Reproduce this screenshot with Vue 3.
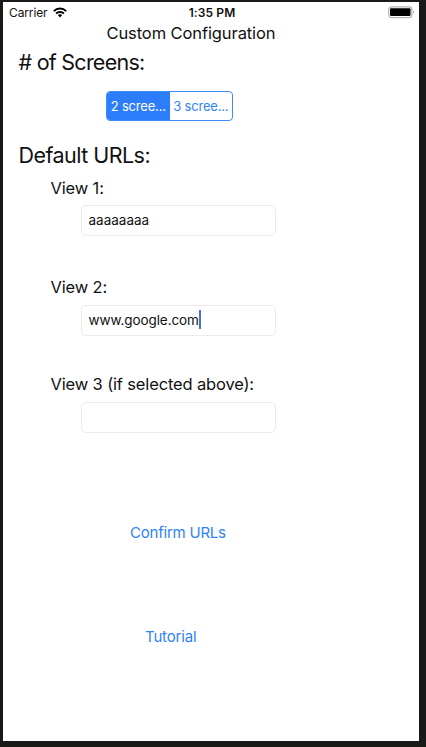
<script setup>
import { ref } from 'vue'

const screens = ref(2)
const options = [
  { value: 2, label: '2 scree...' },
  { value: 3, label: '3 scree...' }
]
const views = ref([
  { id: 'one', label: 'View 1:', url: 'aaaaaaaa', focused: false },
  { id: 'two', label: 'View 2:', url: 'www.google.com', focused: true },
  { id: 'three', label: 'View 3 (if selected above):', url: '', focused: false }
])
</script>

<template>
  <div class="device">
    <main class="screen">
      <header class="status">
        <div class="carrier">
          <span class="carrier-name">Carrier</span>
          <svg class="wifi" width="14" height="11" viewBox="0 0 14 11">
            <g fill="none" stroke="#000" stroke-width="1.9">
              <path d="M0.8 4.1C4.2 0.7 9.8 0.7 13.2 4.1" />
              <path d="M3.1 6.5C5.2 4.4 8.8 4.4 10.9 6.5" />
            </g>
            <path d="M4.8 8.1C6 7 8 7 9.2 8.1L7 10.4Z" />
          </svg>
        </div>
        <span class="time">1:35 PM</span>
        <svg class="battery" width="27" height="13" viewBox="0 0 27 13">
          <rect x="0.7" y="0.8" width="23.1" height="10.8" rx="2.6" fill="#fff" stroke="#b5b5b5" stroke-width="1.2" />
          <rect x="2" y="2.3" width="20.5" height="7.8" rx="1" />
          <path d="M25 4.3C26.3 4.8 26.3 7.6 25 8.1Z" fill="#aaa" />
        </svg>
      </header>

      <h1 class="title">Custom Configuration</h1>
      <h2 class="heading screens-heading"># of Screens:</h2>

      <div class="segmented">
        <button
          v-for="option in options"
          :key="option.value"
          class="segment"
          :class="{ active: screens === option.value }"
          @click="screens = option.value"
        >{{ option.label }}</button>
      </div>

      <h2 class="heading urls-heading">Default URLs:</h2>

      <section v-for="view in views" :key="view.id" class="view" :class="view.id">
        <div class="label">{{ view.label }}</div>
        <div class="field" :class="{ focused: view.focused }">
          <span class="value">{{ view.url }}</span>
          <i v-if="view.focused" class="caret"></i>
        </div>
      </section>

      <button class="link confirm">Confirm URLs</button>
      <button class="link tutorial">Tutorial</button>
    </main>
  </div>
</template>

<style>
body {
  margin: 0;
  background: #191918;
}
</style>

<style scoped>
.device {
  box-sizing: border-box;
  width: 426px;
  height: 747px;
  padding: 2px 7px 6px 3px;
  background: #191918;
  font-family: Inter, "Liberation Sans", sans-serif;
  color: #111;
}
.screen {
  display: flex;
  flex-direction: column;
  align-items: flex-start;
  width: 416px;
  height: 739px;
  background: #fff;
  overflow: hidden;
}
h1, h2 {
  margin: 0;
  font-weight: 400;
}
button {
  display: block;
  padding: 0;
  border: 0;
  background: none;
  font-family: inherit;
  white-space: nowrap;
}
.status {
  display: grid;
  grid-template-columns: 1fr auto 1fr;
  align-items: center;
  box-sizing: border-box;
  width: 416px;
  height: 20px;
  padding: 0 4px 0 6px;
  font-size: 12px;
  line-height: 20px;
}
.carrier {
  display: flex;
  align-items: center;
  gap: 5px;
}
.carrier-name {
  padding-top: 1px;
  letter-spacing: -0.12px;
}
.time {
  padding-top: 1px;
  font-weight: 600;
  letter-spacing: 0.1px;
}
.battery {
  justify-self: end;
}
.title {
  height: 22px;
  margin-left: 103.5px;
  font-size: 16.5px;
  line-height: 22px;
  letter-spacing: -0.1px;
}
.heading {
  height: 28px;
  margin-left: 15.5px;
  font-size: 21.5px;
  line-height: 28px;
}
.screens-heading {
  margin-top: 4px;
  letter-spacing: -0.75px;
}
.segmented {
  display: flex;
  box-sizing: border-box;
  width: 127px;
  height: 30px;
  margin: 15px 0 0 103px;
  border: 1px solid #3a8dfb;
  border-radius: 4px;
  overflow: hidden;
}
.segment {
  flex: 1;
  color: #2f83fb;
  font-size: 13px;
  line-height: 28px;
  letter-spacing: -0.18px;
}
.segment.active {
  background: #2d7dfb;
  color: #fff;
}
.urls-heading {
  margin-top: 20px;
  letter-spacing: -0.54px;
}
.view {
  display: flex;
  flex-direction: column;
}
.view.one {
  margin-top: 7px;
}
.view.two {
  margin-top: 40px;
}
.view.three {
  margin-top: 37px;
}
.label {
  height: 22px;
  margin-left: 47.5px;
  font-size: 16.5px;
  line-height: 22px;
  letter-spacing: -0.15px;
}
.view.one .label {
  height: 21px;
  padding-top: 1px;
}
.field {
  display: flex;
  align-items: center;
  box-sizing: border-box;
  width: 195px;
  height: 31px;
  margin: 7px 0 0 78px;
  padding: 0 0 2px 6.5px;
  border: 1px solid #ebebeb;
  border-radius: 5px;
  font-size: 13.5px;
}
.field.focused {
  letter-spacing: -0.08px;
}
.caret {
  width: 2px;
  height: 19px;
  background: #4a6ee0;
}
.link {
  height: 22px;
  color: #2f83f7;
  font-size: 15px;
  line-height: 22px;
}
.confirm {
  margin: 89px 0 0 127px;
  letter-spacing: -0.22px;
}
.tutorial {
  margin: 82px 0 0 142px;
  letter-spacing: -0.17px;
}
</style>
